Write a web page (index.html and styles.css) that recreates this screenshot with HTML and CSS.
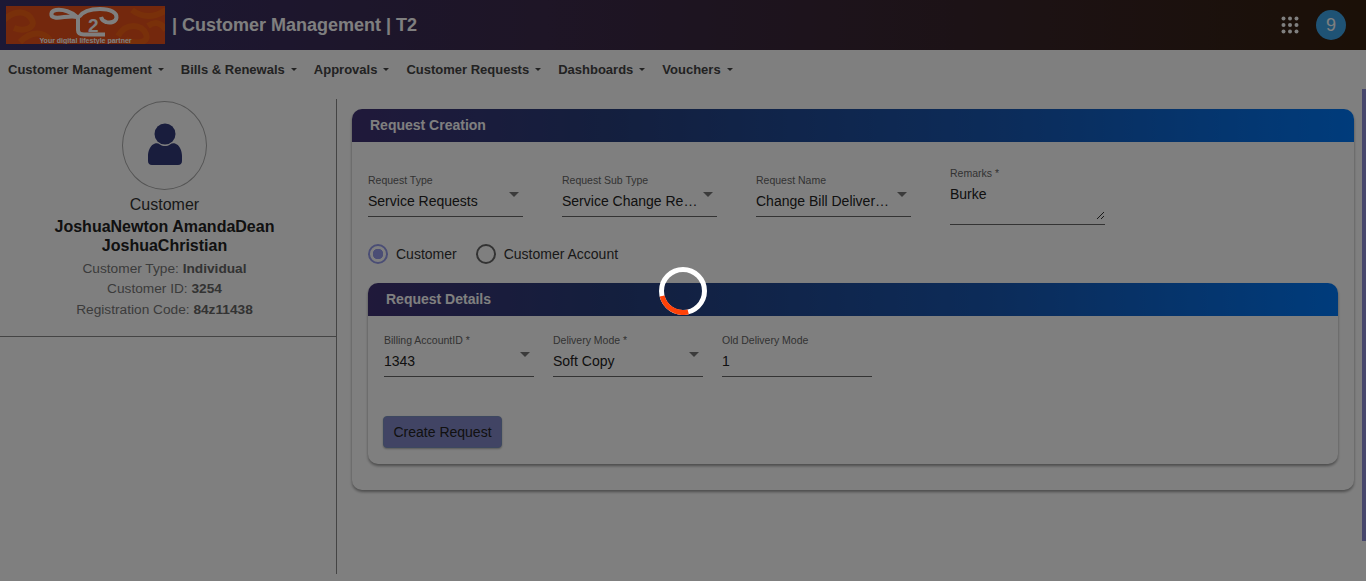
FILE: index.html
```html
<!DOCTYPE html>
<html lang="en">
<head>
    <meta charset="UTF-8">
    <meta name="viewport" content="width=device-width, initial-scale=1.0">
    <title>Customer Management</title>
    <link rel="stylesheet" href="styles.css">
</head>
<body>
    <header class="topbar">
        <svg class="logo" width="159" height="38" viewBox="0 0 159 38">
            <rect width="159" height="38" fill="#e8501a"/>
            <g fill="none" stroke="#ff7010" stroke-width="6" opacity="0.5">
                <path d="M-2 14 C10 2 22 6 26 14 S18 26 8 22"/>
                <path d="M14 36 C26 24 38 26 44 34"/>
                <path d="M112 30 C120 16 136 18 140 28 S128 38 120 34"/>
                <path d="M126 4 C136 12 148 12 160 4"/>
                <path d="M142 20 C150 14 156 18 160 24"/>
            </g>
            <g fill="none" stroke="#fff" stroke-width="4">
                <path d="M71 11 C66 6 57 3 50 4 C44 5 44 11 49 11.5 C55 12.5 64 9 71 11"/>
                <path d="M73 11 C77 5 85 3 94 3 C105 3 111 7 110.5 11.5 C110 16 104 17.5 100 16 C97 15 95.5 13 95 11"/>
                <path d="M72 10 V24 C72 27 74 28.5 78 28.5 H99"/>
            </g>
            <text x="82" y="26" class="logo-two">2</text>
            <text x="79.5" y="37" text-anchor="middle" class="logo-tag">Your digital lifestyle partner</text>
        </svg>
        <span class="app-title">| Customer Management | T2</span>
        <div class="topbar-right">
            <svg class="apps" width="18" height="18" viewBox="0 0 18 18">
                <g fill="#fff">
                    <circle cx="2.5" cy="2.5" r="2"/><circle cx="9" cy="2.5" r="2"/><circle cx="15.5" cy="2.5" r="2"/>
                    <circle cx="2.5" cy="9" r="2"/><circle cx="9" cy="9" r="2"/><circle cx="15.5" cy="9" r="2"/>
                    <circle cx="2.5" cy="15.5" r="2"/><circle cx="9" cy="15.5" r="2"/><circle cx="15.5" cy="15.5" r="2"/>
                </g>
            </svg>
            <div class="user-badge">9</div>
        </div>
    </header>

    <nav class="menu">
        <a class="menu-item">Customer Management</a>
        <a class="menu-item">Bills &amp; Renewals</a>
        <a class="menu-item">Approvals</a>
        <a class="menu-item">Customer Requests</a>
        <a class="menu-item">Dashboards</a>
        <a class="menu-item">Vouchers</a>
    </nav>

    <div class="content">
        <aside class="side">
            <div class="profile">
                <div class="avatar">
                    <svg width="36" height="42" viewBox="0 0 36 42">
                        <circle cx="18" cy="11" r="10.5" fill="#323a7a"/>
                        <path d="M6 21.5 C9 19.5 11 20 13 21.5 C16 23.5 20 23.5 23 21.5 C25 20 27 19.5 30 21.5 C33 23.5 35 28 35 33 V38 C35 40.5 33.5 42 31 42 H5 C2.5 42 1 40.5 1 38 V33 C1 28 3 23.5 6 21.5 Z" fill="#323a7a"/>
                    </svg>
                </div>
                <div class="role">Customer</div>
                <div class="cust-name">JoshuaNewton AmandaDean JoshuaChristian</div>
                <div class="info">Customer Type: <b>Individual</b></div>
                <div class="info">Customer ID: <b>3254</b></div>
                <div class="info">Registration Code: <b>84z11438</b></div>
            </div>
        </aside>

        <main class="main">
            <section class="card">
                <h2 class="card-title">Request Creation</h2>
                <div class="card-body">
                    <div class="field-row">
                        <div class="field select">
                            <label>Request Type</label>
                            <div class="value">Service Requests</div>
                        </div>
                        <div class="field select">
                            <label>Request Sub Type</label>
                            <div class="value">Service Change Re…</div>
                        </div>
                        <div class="field select">
                            <label>Request Name</label>
                            <div class="value">Change Bill Deliver…</div>
                        </div>
                        <div class="field remarks">
                            <label>Remarks *</label>
                            <div class="value">Burke</div>
                            <svg class="resizer" width="9" height="9" viewBox="0 0 9 9">
                                <path d="M1 8 L8 1 M5 8 L8 5" stroke="#333" stroke-width="1" fill="none"/>
                            </svg>
                        </div>
                    </div>

                    <div class="radio-row">
                        <div class="radio checked"><span class="radio-dot"></span>Customer</div>
                        <div class="radio"><span class="radio-dot"></span>Customer Account</div>
                    </div>

                    <section class="card inner">
                        <h2 class="card-title">Request Details</h2>
                        <div class="card-body">
                            <div class="field-row">
                                <div class="field select">
                                    <label>Billing AccountID *</label>
                                    <div class="value">1343</div>
                                </div>
                                <div class="field select">
                                    <label>Delivery Mode *</label>
                                    <div class="value">Soft Copy</div>
                                </div>
                                <div class="field">
                                    <label>Old Delivery Mode</label>
                                    <div class="value">1</div>
                                </div>
                            </div>
                            <button class="create-btn" type="button">Create Request</button>
                        </div>
                    </section>
                </div>
            </section>
        </main>
    </div>

    <div class="scroll-thumb"></div>

    <div class="overlay"></div>
    <svg class="spinner" width="48" height="48" viewBox="0 0 48 48">
        <circle cx="24" cy="24" r="21.5" fill="none" stroke="#fff" stroke-width="5"/>
        <circle cx="24" cy="24" r="21.5" fill="none" stroke="#ff4208" stroke-width="5" stroke-dasharray="33.8 101.3" transform="rotate(76 24 24)"/>
    </svg>
</body>
</html>
```

FILE: styles.css
```css
html, body {
    height: 100%;
    overflow: hidden;
}
body {
    font-family: "Liberation Sans", Arial, sans-serif;
    background-color: #fff;
    color: #222;
    margin: 0;
}
.topbar {
    height: 50px;
    display: flex;
    align-items: center;
    padding: 0 20px 0 6px;
    color: #fff;
    background: linear-gradient(90deg, #38306a 0%, #3c2a4c 40%, #36200e 100%);
}
.logo {
    display: block;
    flex: none;
}
.logo-two {
    font-family: "Liberation Sans", Arial, sans-serif;
    font-size: 19px;
    font-weight: bold;
    fill: #fff;
}
.logo-tag {
    font-family: "Liberation Sans", Arial, sans-serif;
    font-size: 7px;
    font-weight: bold;
    fill: #fff;
}
.app-title {
    margin-left: 7px;
    font-size: 18px;
    font-weight: bold;
}
.topbar-right {
    margin-left: auto;
    display: flex;
    align-items: center;
    gap: 17px;
}
.apps {
    display: block;
}
.user-badge {
    width: 30px;
    height: 30px;
    border-radius: 50%;
    background-color: #3fa6ea;
    display: flex;
    align-items: center;
    justify-content: center;
    font-size: 18px;
}
.menu {
    height: 39px;
    display: flex;
    align-items: center;
    padding-left: 8px;
    gap: 17px;
}
.menu-item {
    font-size: 13px;
    font-weight: bold;
    color: #444;
    display: flex;
    align-items: center;
    gap: 6px;
}
.menu-item::after {
    content: "";
    border-top: 3px solid #444;
    border-left: 3.5px solid transparent;
    border-right: 3.5px solid transparent;
}
.content {
    display: flex;
    padding-top: 10px;
    height: 475px;
}
.side {
    width: 336px;
    flex: none;
    border-right: 1px solid #888;
}
.profile {
    padding: 0 7px 15.5px 0;
    border-bottom: 1px solid #888;
    text-align: center;
    display: flex;
    flex-direction: column;
    align-items: center;
}
.avatar {
    width: 83px;
    height: 87px;
    margin: 2px 0 5px;
    border: 1px solid #aaa;
    border-radius: 50%;
    display: flex;
    align-items: center;
    justify-content: center;
}
.avatar svg {
    margin-bottom: 3px;
}
.role {
    font-size: 16px;
    line-height: 20px;
    color: #333;
}
.cust-name {
    width: 260px;
    font-size: 16px;
    font-weight: bold;
    line-height: 19px;
    margin: 2px 0 3.5px;
}
.info {
    font-size: 13.7px;
    line-height: 20.5px;
    color: #777;
}
.info b {
    color: #666;
}
.main {
    flex: 1;
    padding: 10px 12px 0 15px;
}
.card {
    background-color: #fff;
    border-radius: 10px;
    box-shadow: 0 2px 3px rgba(0, 0, 0, 0.4);
}
.card-title {
    margin: 0;
    height: 33px;
    line-height: 33px;
    padding-left: 18px;
    font-size: 14px;
    font-weight: bold;
    color: #fff;
    border-radius: 10px 10px 0 0;
    background: linear-gradient(90deg, #403274 0%, #283e7c 25%, #1858b4 65%, #0078f8 100%);
}
.card-body {
    padding: 31px 16px 26px;
}
.field-row {
    display: flex;
    gap: 39px;
}
.field {
    width: 155px;
    height: 43px;
    border-bottom: 1px solid #666;
    position: relative;
}
.field label {
    display: block;
    font-size: 10.5px;
    line-height: 14px;
    color: #666;
}
.field .value {
    font-size: 14px;
    line-height: 18px;
    margin-top: 5px;
    color: #222;
}
.select::after {
    content: "";
    position: absolute;
    right: 4px;
    top: 19px;
    border-top: 5px solid #777;
    border-left: 5px solid transparent;
    border-right: 5px solid transparent;
}
.remarks {
    height: 58px;
    margin-top: -7px;
    align-self: flex-start;
}
.resizer {
    position: absolute;
    right: 0;
    bottom: 4px;
}
.radio-row {
    display: flex;
    gap: 19px;
    margin-top: 19px;
}
.radio {
    display: flex;
    align-items: center;
    gap: 8px;
    font-size: 14px;
    line-height: 20px;
    color: #333;
}
.radio-dot {
    width: 16px;
    height: 16px;
    border: 2px solid #666;
    border-radius: 50%;
    display: block;
}
.radio.checked .radio-dot {
    border-color: #969ceb;
    background: radial-gradient(circle, #969ceb 0 5px, transparent 5.5px);
}
.card.inner {
    margin-top: 19px;
}
.inner .card-body {
    padding: 17px 16px 16px;
}
.inner .field-row {
    gap: 19px;
}
.inner .field {
    width: 150px;
}
.create-btn {
    display: block;
    margin-top: 39px;
    margin-left: -1px;
    width: 119px;
    height: 32px;
    padding: 0;
    font-family: inherit;
    font-size: 14px;
    color: #222;
    background-color: #8288c8;
    border: 1px solid #7a90c0;
    border-radius: 4px;
    box-shadow: 0 1px 2px rgba(0, 0, 0, 0.3);
}
.scroll-thumb {
    position: fixed;
    top: 89px;
    right: 0;
    width: 4px;
    height: 452px;
    background-color: #8f8fd8;
}
.overlay {
    position: fixed;
    inset: 0;
    background-color: rgba(0, 0, 0, 0.5);
}
.spinner {
    position: fixed;
    left: 659px;
    top: 267px;
}
```
